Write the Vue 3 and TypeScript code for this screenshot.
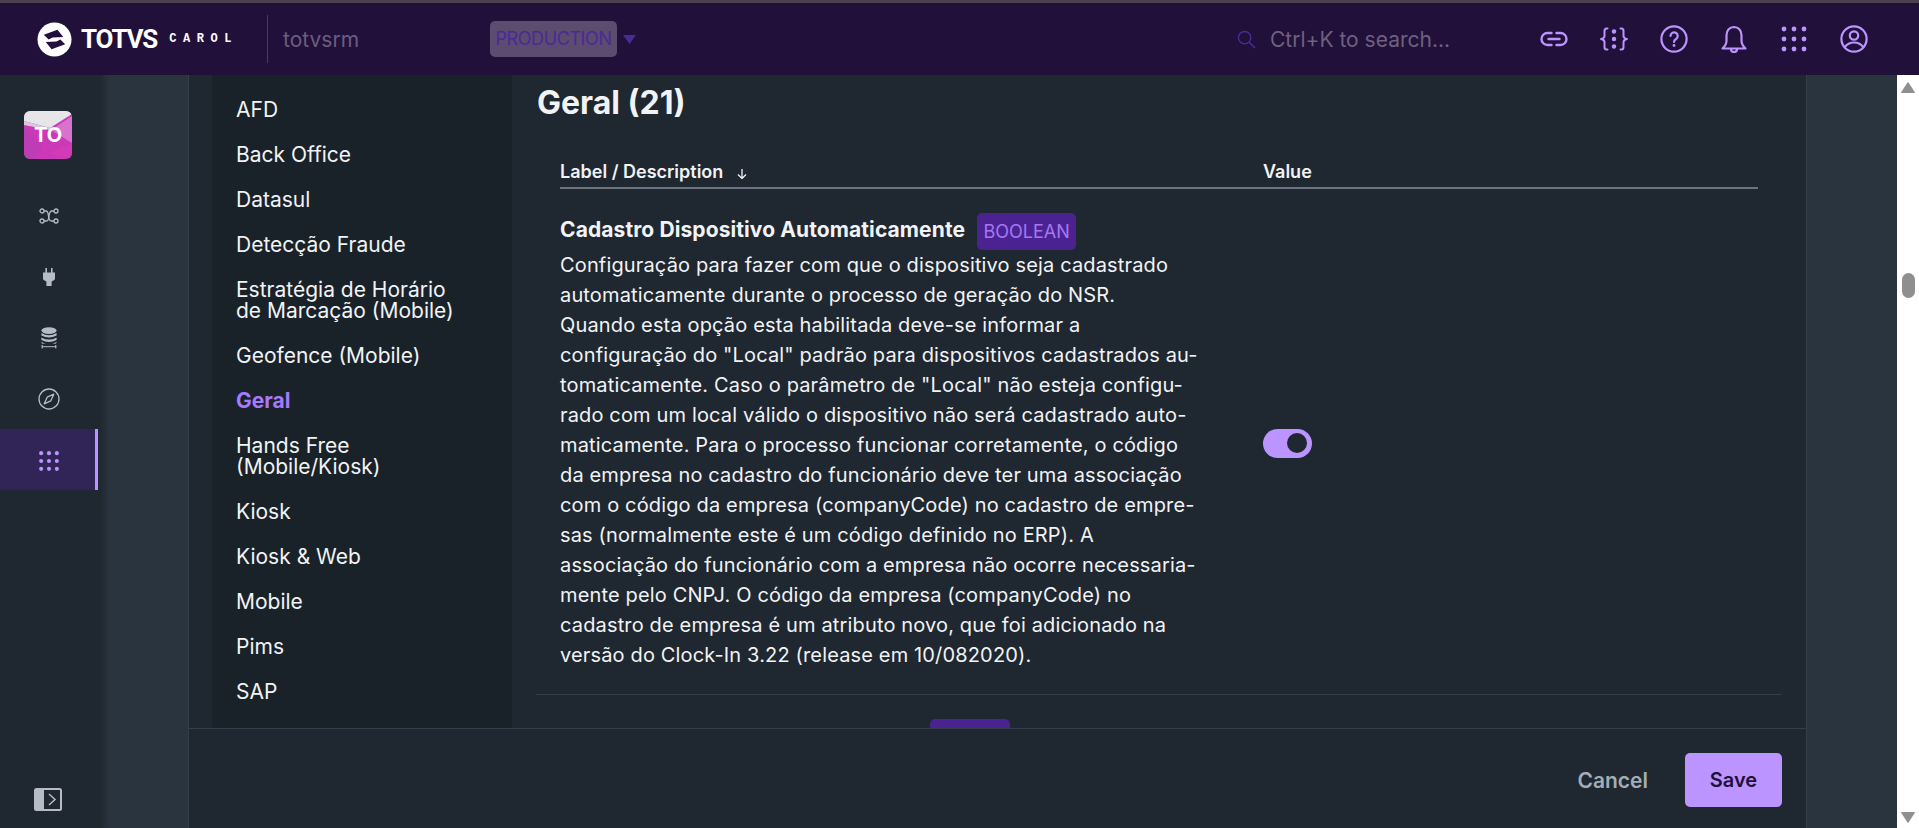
<script setup lang="ts">
interface NavItem {
  label: string
  active?: boolean
}

const navItems: NavItem[] = [
  { label: 'AFD' },
  { label: 'Back Office' },
  { label: 'Datasul' },
  { label: 'Detecção Fraude' },
  { label: 'Estratégia de Horário de Marcação (Mobile)' },
  { label: 'Geofence (Mobile)' },
  { label: 'Geral', active: true },
  { label: 'Hands Free (Mobile/Kiosk)' },
  { label: 'Kiosk' },
  { label: 'Kiosk & Web' },
  { label: 'Mobile' },
  { label: 'Pims' },
  { label: 'SAP' },
]

const gridDots = [4, 14, 24].flatMap((cy) => [4, 14, 24].map((cx) => ({ cx, cy })))

// the source text is hyphenated by the browser, so its breaks are kept as they appear
const descriptionLines = [
  'Configuração para fazer com que o dispositivo seja cadastrado',
  'automaticamente durante o processo de geração do NSR.',
  'Quando esta opção esta habilitada deve-se informar a',
  'configuração do "Local" padrão para dispositivos cadastrados au-',
  'tomaticamente. Caso o parâmetro de "Local" não esteja configu-',
  'rado com um local válido o dispositivo não será cadastrado auto-',
  'maticamente. Para o processo funcionar corretamente, o código',
  'da empresa no cadastro do funcionário deve ter uma associação',
  'com o código da empresa (companyCode) no cadastro de empre-',
  'sas (normalmente este é um código definido no ERP). A',
  'associação do funcionário com a empresa não ocorre necessaria-',
  'mente pelo CNPJ. O código da empresa (companyCode) no',
  'cadastro de empresa é um atributo novo, que foi adicionado na',
  'versão do Clock-In 3.22 (release em 10/082020).',
]
</script>

<template>
  <div class="app">
    <div class="strip"></div>
    <header class="topbar">
      <div class="brand">
        <svg class="brand-mark" viewBox="0 0 36 36">
          <circle cx="18" cy="18" r="17.5" fill="#fff" />
          <path d="M7 13 L21 8 L27 15.5 L16 16 L12 18 Z" fill="#211039" />
          <path d="M29 23 L15 28 L9 20.5 L20 20 L24 18 Z" fill="#211039" />
        </svg>
        <span class="brand-name">TOTVS</span>
        <span class="brand-sub">CAROL</span>
      </div>
      <div class="divider"></div>
      <div class="tenant">totvsrm</div>
      <div class="env">PRODUCTION</div>
      <svg class="env-caret" viewBox="0 0 13 9"><path d="M0 0 H13 L6.5 9 Z" fill="#4a2a96" /></svg>

      <div class="search">
        <svg class="search-icon" viewBox="0 0 20 20" fill="none" stroke="#4a2a96" stroke-width="1.6">
          <circle cx="8" cy="8" r="6.5" />
          <path d="M13 13 L19 19" />
        </svg>
        <span>Ctrl+K to search...</span>
      </div>

      <div class="actions">
        <button class="action">
          <svg width="28" height="28" viewBox="0 0 28 28" fill="none" stroke="#bb94ff" stroke-width="2.4" stroke-linecap="round">
            <path d="M11.5 8 H7.5 a6 6 0 0 0 0 12 h4" />
            <path d="M16.5 8 H20.5 a6 6 0 0 1 0 12 h-4" />
            <path d="M8.5 14 H19.5" />
          </svg>
        </button>
        <button class="action">
          <svg width="28" height="28" viewBox="0 0 28 28" fill="none" stroke="#bb94ff" stroke-width="2" stroke-linecap="round">
            <path d="M7.5 3.5 H6.5 Q4.5 3.5 4.5 6 V11 Q4.5 13 1.5 14 Q4.5 15 4.5 17 V22 Q4.5 24.5 6.5 24.5 H7.5" />
            <path d="M20.5 3.5 H21.5 Q23.5 3.5 23.5 6 V11 Q23.5 13 26.5 14 Q23.5 15 23.5 17 V22 Q23.5 24.5 21.5 24.5 H20.5" />
            <circle cx="14" cy="6.5" r="2.2" fill="#bb94ff" stroke="none" />
            <circle cx="14" cy="14" r="2.2" fill="#bb94ff" stroke="none" />
            <circle cx="14" cy="21.5" r="2.2" fill="#bb94ff" stroke="none" />
          </svg>
        </button>
        <button class="action">
          <svg width="28" height="28" viewBox="0 0 28 28" fill="none" stroke="#bb94ff" stroke-width="2.2" stroke-linecap="round">
            <circle cx="14" cy="14" r="12.6" />
            <path d="M10.5 11 a3.6 3.6 0 1 1 5.6 3 Q14 15.3 14 17" />
            <circle cx="14" cy="20.5" r="1.4" fill="#bb94ff" stroke="none" />
          </svg>
        </button>
        <button class="action">
          <svg width="28" height="28" viewBox="0 0 28 28" fill="none" stroke="#bb94ff" stroke-width="2.2" stroke-linejoin="round">
            <path d="M14 2 Q7 2.5 6.5 10 V15.5 Q6.5 20 2.5 23.5 H25.5 Q21.5 20 21.5 15.5 V10 Q21 2.5 14 2 Z" />
            <path d="M11 24 a3 3 0 0 0 6 0" />
          </svg>
        </button>
        <button class="action">
          <svg width="28" height="28" viewBox="0 0 28 28" fill="#bb94ff">
            <circle v-for="d in gridDots" :key="`${d.cx}-${d.cy}`" :cx="d.cx" :cy="d.cy" r="2.4" />
          </svg>
        </button>
        <button class="action">
          <svg width="28" height="28" viewBox="0 0 28 28" fill="none" stroke="#bb94ff" stroke-width="2.2">
            <circle cx="14" cy="14" r="12.6" />
            <circle cx="14" cy="10.5" r="4.2" />
            <path d="M4.5 22.5 Q8 17.5 14 17.5 Q20 17.5 23.5 22.5" />
          </svg>
        </button>
      </div>
    </header>

    <div class="body">
      <aside class="rail">
        <div class="avatar">
          <svg class="avatar-art" viewBox="0 0 48 48">
            <rect width="48" height="48" fill="#cb38b8" />
            <path d="M48 5 L27 19 L48 32 Z" fill="#d873cd" />
            <path d="M48 32 L24 42 L48 48 Z" fill="#d23ab6" />
            <path d="M0 16 L18 36 L10 48 L0 48 Z" fill="#bd3db4" />
            <path d="M0 0 H48 V3 L26 17 L0 10 Z" fill="#e6e6e8" />
            <path d="M0 10 L26 17 L26 19 L0 14 Z" fill="#d8c8dc" />
          </svg>
          <span class="avatar-text">TO</span>
        </div>

        <nav class="rail-nav">
          <a class="rail-item">
            <svg width="20" height="16" viewBox="0 0 20 16" fill="none" stroke="#b5bcc7" stroke-width="1.3">
              <circle cx="3" cy="3" r="2" />
              <circle cx="3" cy="13" r="2" />
              <circle cx="17" cy="3" r="2" />
              <circle cx="17" cy="13" r="2" />
              <path d="M5 3 H7 Q9 3 9.5 8 Q10 13 12.5 13 H15" />
              <path d="M5 13 H7.5 Q9.5 13 10 8 Q10.5 3 13 3 H15" />
            </svg>
          </a>
          <a class="rail-item">
            <svg width="12" height="18" viewBox="0 0 12 18" fill="#b5bcc7">
              <rect x="2.4" y="0" width="1.6" height="5" />
              <rect x="8" y="0" width="1.6" height="5" />
              <path d="M0 4.5 H12 V10.5 Q12 12 10.5 12.5 L8.6 13.5 V18 H3.4 V13.5 L1.5 12.5 Q0 12 0 10.5 Z" />
            </svg>
          </a>
          <a class="rail-item">
            <svg width="16" height="22" viewBox="0 0 16 22" fill="#b5bcc7">
              <ellipse cx="8" cy="3.6" rx="7.6" ry="3.4" />
              <path d="M0.4 6 Q8 10.5 15.6 6 V8.5 Q8 12.5 0.4 8.5 Z" />
              <path d="M0.4 10.4 Q8 14.8 15.6 10.4 V13 Q8 17 0.4 13 Z" />
              <path d="M0.4 14.8 Q3 16.6 5 16.8 H1.5 Q0.4 16 0.4 15 Z" />
              <path d="M15.6 14.8 Q13 16.6 11 16.8 H14.5 Q15.6 16 15.6 15 Z" />
              <rect x="1" y="19.2" width="14" height="1" />
              <rect x="0.6" y="18" width="1.2" height="3.4" />
              <rect x="14.2" y="18" width="1.2" height="3.4" />
            </svg>
          </a>
          <a class="rail-item">
            <svg width="22" height="22" viewBox="0 0 22 22" fill="none" stroke="#b5bcc7" stroke-width="1.3">
              <circle cx="11" cy="11" r="10" />
              <path d="M15.8 6.2 L12.8 12.8 L6.2 15.8 L9.2 9.2 Z" stroke-linejoin="round" />
            </svg>
          </a>
          <a class="rail-item active">
            <svg width="22" height="22" viewBox="0 0 28 28" fill="#bb94ff">
              <circle v-for="d in gridDots" :key="`${d.cx}-${d.cy}`" :cx="d.cx" :cy="d.cy" r="2.6" />
            </svg>
          </a>
        </nav>

        <button class="collapse">
          <svg width="28" height="23" viewBox="0 0 28 23">
            <rect width="28" height="23" rx="2.5" fill="#b5bcc7" />
            <rect x="10" y="2" width="16" height="19" fill="#1f2730" />
            <path d="M15 6 L21 11.5 L15 17" fill="none" stroke="#b5bcc7" stroke-width="1.5" />
          </svg>
        </button>
      </aside>

      <div class="gutter gutter-left"></div>

      <main class="main">
        <div class="main-body">
          <nav class="subnav">
            <a
              v-for="item in navItems"
              :key="item.label"
              class="subnav-item"
              :class="{ active: item.active }"
            >{{ item.label }}</a>
          </nav>

          <section class="content">
            <h1 class="title">Geral (21)</h1>
            <div class="table-head">
              <div class="head-cell">
                Label / Description
                <svg class="sort" width="10" height="10" viewBox="0 0 10 10" fill="none" stroke="#f1f3f5" stroke-width="1.3">
                  <path d="M5 0 V9 M1 5.5 L5 9.5 L9 5.5" />
                </svg>
              </div>
              <div class="head-cell">Value</div>
            </div>

            <div class="row">
              <div class="row-text">
                <div class="row-title">
                  <span class="row-name">Cadastro Dispositivo Automaticamente</span>
                  <span class="badge">BOOLEAN</span>
                </div>
                <p class="row-desc" lang="pt">
                  <span v-for="line in descriptionLines" :key="line" class="row-line">{{ line }}</span>
                </p>
              </div>
              <div class="row-value">
                <span class="toggle"><span class="knob"></span></span>
              </div>
            </div>

            <div class="row">
              <div class="row-text">
                <div class="row-title">
                  <span class="row-name row-name-wide"></span>
                  <span class="badge badge-short"></span>
                </div>
              </div>
            </div>
          </section>
        </div>

        <footer class="footer">
          <button class="btn-cancel">Cancel</button>
          <button class="btn-save">Save</button>
        </footer>
      </main>

      <div class="gutter gutter-right"></div>

      <div class="scrollbar">
        <svg width="14" height="11" viewBox="0 0 14 11"><path d="M7 0.5 L13.5 10.5 H0.5 Z" fill="#8f8f8f" stroke="#8f8f8f" stroke-linejoin="round" /></svg>
        <div class="scroll-track"><div class="scroll-thumb"></div></div>
        <svg width="14" height="11" viewBox="0 0 14 11"><path d="M7 10.5 L13.5 0.5 H0.5 Z" fill="#8f8f8f" stroke="#8f8f8f" stroke-linejoin="round" /></svg>
      </div>
    </div>
  </div>
</template>

<style scoped>
.app {
  display: flex;
  flex-direction: column;
  height: 828px;
  overflow: hidden;
  font-family: Inter, "Noto Sans", sans-serif;
  color: #f1f3f5;
  background: #1f2730;
}

.strip {
  height: 3px;
  background: #4f3f52;
}

.topbar {
  display: flex;
  align-items: center;
  height: 72px;
  padding: 0 35px 0 37px;
  background: #211039;
}

.brand {
  display: flex;
  align-items: center;
  width: 195px;
}

.brand-mark {
  width: 35px;
  height: 35px;
  flex: none;
}

.brand-name {
  margin-left: 9px;
  font-family: Roboto, sans-serif;
  font-size: 26px;
  font-weight: 700;
  color: #fff;
  letter-spacing: -1.2px;
}

.brand-sub {
  margin-left: 12px;
  font-family: "Liberation Mono", monospace;
  font-size: 12px;
  font-weight: 700;
  letter-spacing: 6.6px;
  color: #fff;
}

.divider {
  width: 1px;
  height: 48px;
  margin-left: 35px;
  background: #4a3b60;
}

.tenant {
  width: 207px;
  margin-left: 15px;
  font-size: 21px;
  color: #6b5d80;
}

.env {
  width: 127px;
  height: 36px;
  line-height: 36px;
  text-align: center;
  border-radius: 5px;
  background: #5d4c70;
  color: #4a2a96;
  font-size: 18px;
  letter-spacing: -0.4px;
}

.env-caret {
  width: 13px;
  height: 9px;
  margin-left: 6px;
}

.search {
  display: flex;
  align-items: center;
  gap: 14px;
  width: 287px;
  margin-left: auto;
  font-size: 21px;
  color: #6e6180;
}

.search-icon {
  width: 19px;
  height: 19px;
}

.actions {
  display: flex;
}

.action {
  display: flex;
  align-items: center;
  justify-content: center;
  width: 60px;
  height: 40px;
  padding: 0;
  border: 0;
  background: none;
}

.body {
  display: flex;
  flex: 1;
  min-height: 0;
}

.rail {
  display: flex;
  flex-direction: column;
  align-items: stretch;
  width: 98px;
  flex: none;
  background: #1f2730;
}

.avatar {
  position: relative;
  display: flex;
  align-items: center;
  justify-content: center;
  width: 48px;
  height: 48px;
  margin: 36px 0 0 24px;
  border-radius: 6px;
  overflow: hidden;
}

.avatar-art {
  position: absolute;
  inset: 0;
  width: 48px;
  height: 48px;
}

.avatar-text {
  position: relative;
  font-size: 20px;
  font-weight: 700;
  color: #fff;
}

.rail-nav {
  display: flex;
  flex-direction: column;
  margin-top: 26px;
}

.rail-item {
  display: flex;
  align-items: center;
  justify-content: center;
  height: 61px;
}

.rail-item.active {
  height: 61px;
  padding-top: 3px;
  box-sizing: border-box;
  background: #312456;
  box-shadow: inset -3px 0 0 #bb94ff;
}

.collapse {
  display: flex;
  margin: auto 0 17px 34px;
  padding: 0;
  border: 0;
  background: none;
}

.gutter {
  flex: 1;
  background: #29343e;
}

.gutter-left {
  background: linear-gradient(90deg, #1e262e 0, #29343e 12px);
}

.main {
  display: flex;
  flex-direction: column;
  width: 1619px;
  flex: none;
  box-sizing: border-box;
  border-left: 1px solid #343e4a;
  border-right: 1px solid #343e4a;
  background: #1f2730;
}

.main-body {
  display: flex;
  flex: 1;
  min-height: 0;
  padding-left: 23px;
  overflow: hidden;
}

.subnav {
  display: flex;
  flex-direction: column;
  width: 300px;
  flex: none;
  padding-top: 12px;
  background: #1a2229;
}

.subnav-item {
  padding: 12px 50px 12px 24px;
  font-size: 21px;
  line-height: 21px;
  color: #f1f3f5;
}

.subnav-item.active {
  font-weight: 700;
  color: #a679ff;
}

.content {
  width: 1294px;
  flex: none;
  box-sizing: border-box;
  padding: 10px 24px 0 24px;
}

.title {
  margin: 0 0 0 1px;
  font-size: 32px;
  line-height: 36px;
  font-weight: 700;
}

.table-head {
  display: grid;
  grid-template-columns: 703px 1fr;
  align-items: center;
  height: 48px;
  margin: 20px 24px 0;
  padding-top: 14px;
  box-sizing: border-box;
  border-bottom: 2px solid #6b7280;
}

.head-cell {
  font-size: 18px;
  font-weight: 600;
}

.sort {
  margin-left: 9px;
  vertical-align: -1px;
}

.row {
  display: grid;
  grid-template-columns: 703px 1fr;
  padding: 24px;
  border-bottom: 1px solid #343e4a;
}

.row-title {
  display: flex;
  align-items: center;
  gap: 12px;
  height: 37px;
  font-size: 21px;
  font-weight: 700;
  letter-spacing: 0.1px;
}

.row-name {
  padding-bottom: 4px;
  white-space: nowrap;
}

.row-name-wide {
  width: 358px;
}

.badge {
  display: inline-flex;
  align-items: center;
  justify-content: center;
  width: 99px;
  height: 37px;
  flex: none;
  border-radius: 5px;
  background: #4a2391;
  color: #a776f5;
  font-size: 18px;
  font-weight: 400;
  letter-spacing: 0;
}

.badge-short {
  width: 80px;
}

.row-desc {
  margin: 0;
  font-size: 20px;
  line-height: 30px;
  letter-spacing: 0.15px;
}

.row-line {
  display: block;
  white-space: nowrap;
}

.row-value {
  display: flex;
  align-items: center;
  padding-top: 3px;
}

.toggle {
  display: flex;
  align-items: center;
  justify-content: flex-end;
  width: 49px;
  height: 29px;
  padding-right: 5px;
  box-sizing: border-box;
  border-radius: 15px;
  background: #bb94ff;
}

.knob {
  width: 20px;
  height: 20px;
  border-radius: 50%;
  background: #1f2730;
}

.footer {
  display: flex;
  align-items: center;
  justify-content: flex-end;
  gap: 37px;
  height: 100px;
  flex: none;
  padding: 3px 24px 0 0;
  box-sizing: border-box;
  border-top: 1px solid #343e4a;
}

.btn-cancel {
  padding: 0;
  border: 0;
  background: none;
  font-family: inherit;
  font-size: 21px;
  font-weight: 600;
  color: #a3adb5;
}

.btn-save {
  width: 97px;
  height: 54px;
  border: 0;
  border-radius: 5px;
  background: #bb94ff;
  font-family: inherit;
  font-size: 20px;
  font-weight: 600;
  color: #211039;
}

.scrollbar {
  display: flex;
  flex-direction: column;
  align-items: center;
  width: 22px;
  flex: none;
  padding: 7px 0 5px;
  box-sizing: border-box;
  background: #fff;
}

.scroll-track {
  display: flex;
  justify-content: center;
  flex: 1;
  padding-top: 180px;
}

.scroll-thumb {
  width: 13px;
  height: 25px;
  border-radius: 7px;
  background: #8f8f8f;
}
</style>

<style>
html,
body {
  margin: 0;
  background: #1f2730;
}
</style>
